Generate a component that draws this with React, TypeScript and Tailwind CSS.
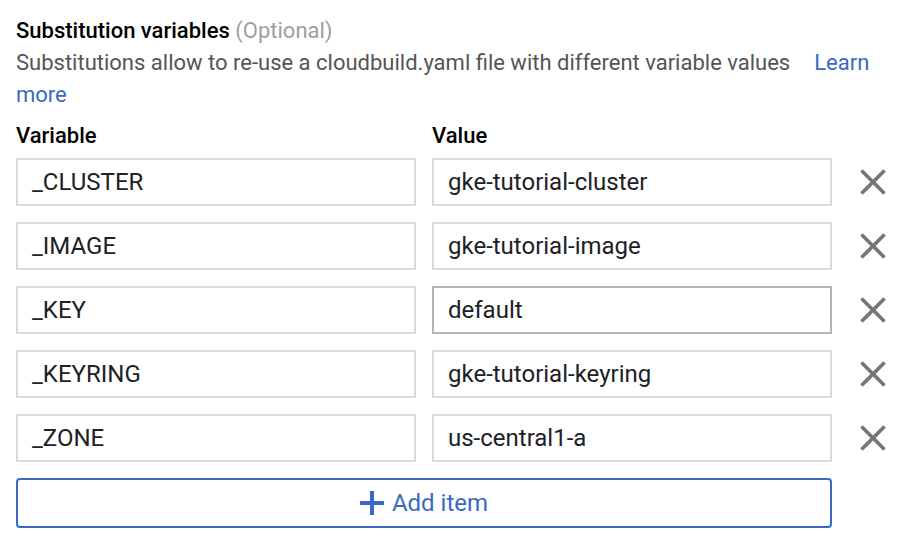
import React from 'react';

const rows = [
  { key: '_CLUSTER', value: 'gke-tutorial-cluster' },
  { key: '_IMAGE', value: 'gke-tutorial-image' },
  { key: '_KEY', value: 'default', active: true },
  { key: '_KEYRING', value: 'gke-tutorial-keyring' },
  { key: '_ZONE', value: 'us-central1-a' },
];

const CloseIcon = () => (
  <svg width="44" height="44" viewBox="0 0 24 24" fill="#757575">
    <path d="M19 6.41 17.59 5 12 10.59 6.41 5 5 6.41 10.59 12 5 17.59 6.41 19 12 13.41 17.59 19 19 17.59 13.41 12z" />
  </svg>
);

const App: React.FC = () => {
  return (
    <div className="w-[902px] h-[546px] bg-white pl-4 pt-[15px] font-['Roboto',sans-serif] text-[#202124]">
      <div className="text-[22px] leading-[32px]">
        <span className="font-medium text-black">Substitution variables</span>{' '}
        <span className="text-[#9e9e9e]">(Optional)</span>
      </div>
      <div className="text-[22px] leading-[32px] text-[#555] w-[870px]">
        <div className="flex">
          <span>Substitutions allow to re-use a cloudbuild.yaml file with different variable values</span>
          <span className="ml-[24px] text-[#3b68c4]">Learn</span>
        </div>
        <div className="text-[#3b68c4]">more</div>
      </div>
      <div className="flex gap-4 mt-[11px] text-[22px] leading-[28px] font-medium text-black">
        <div className="w-[400px] shrink-0">Variable</div>
        <div className="w-[400px] shrink-0">Value</div>
      </div>
      <div className="flex flex-col gap-4 mt-[8px]">
        {rows.map((r) => (
          <div key={r.key} className="flex items-center">
            <div className="w-[400px] shrink-0 h-[48px] border-2 border-[#dadada] flex items-center px-[14px] text-[24px]">
              {r.key}
            </div>
            <div
              className={`ml-4 w-[400px] shrink-0 h-[48px] border-2 flex items-center px-[14px] text-[24px] ${
                r.active ? 'border-[#b4b4b4]' : 'border-[#dadada]'
              }`}
            >
              {r.value}
            </div>
            <div className="w-[82px] shrink-0 flex justify-center">
              <CloseIcon />
            </div>
          </div>
        ))}
      </div>
      <button className="mt-4 w-[816px] h-[50px] border-2 border-[#3b68c4] rounded-[4px] flex items-center justify-center gap-2 text-[24px] text-[#3b68c4]">
        <svg width="24" height="24" viewBox="0 0 24 24">
          <rect x="10" y="0" width="4" height="24" fill="#3b68c4" />
          <rect x="0" y="10" width="24" height="4" fill="#3b68c4" />
        </svg>
        Add item
      </button>
    </div>
  );
};

export default App;
